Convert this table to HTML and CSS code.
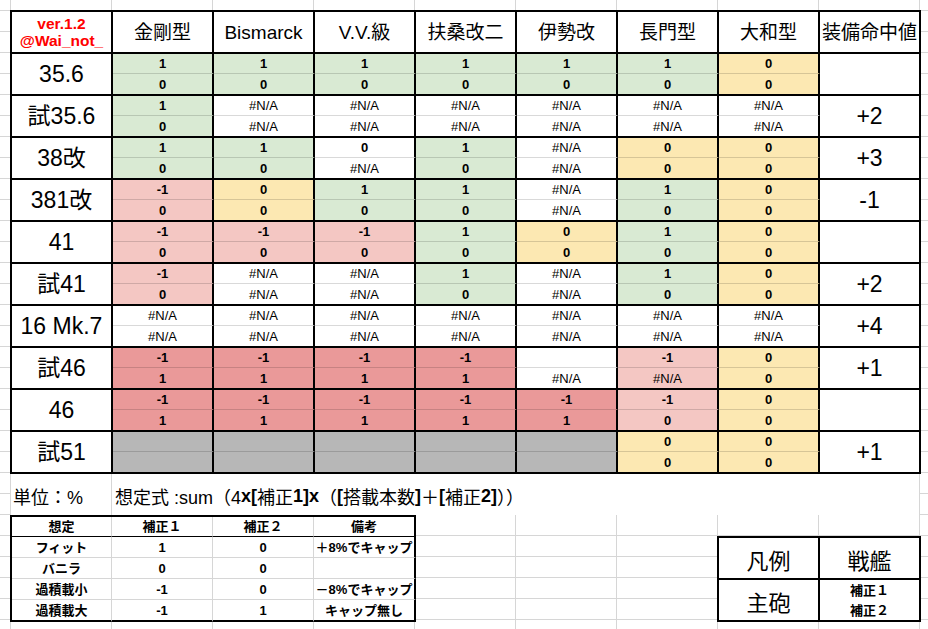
FILE: index.html
```html
<!DOCTYPE html>
<html lang="ja">
<head>
<meta charset="utf-8">
<title>主砲フィット表</title>
<link rel="stylesheet" href="styles.css">
</head>
<body>
<div class="sheet">
  <div class="main">
    <div class="hd ver"><span>ver.1.2</span><span>@Wai_not_</span></div>
    <div class="hd">金剛型</div>
    <div class="hd">Bismarck</div>
    <div class="hd">V.V.級</div>
    <div class="hd">扶桑改二</div>
    <div class="hd">伊勢改</div>
    <div class="hd">長門型</div>
    <div class="hd">大和型</div>
    <div class="hd">装備命中値</div>

    <!-- 35.6 -->
    <div class="lbl">35.6</div>
    <div class="t g">1</div><div class="t g">1</div><div class="t g">1</div><div class="t g">1</div><div class="t g">1</div><div class="t g">1</div><div class="t y">0</div>
    <div class="hit"></div>
    <div class="b g">0</div><div class="b g">0</div><div class="b g">0</div><div class="b g">0</div><div class="b g">0</div><div class="b g">0</div><div class="b y">0</div>

    <!-- 試35.6 -->
    <div class="lbl">試35.6</div>
    <div class="t g">1</div><div class="t na">#N/A</div><div class="t na">#N/A</div><div class="t na">#N/A</div><div class="t na">#N/A</div><div class="t na">#N/A</div><div class="t na">#N/A</div>
    <div class="hit">+2</div>
    <div class="b g">0</div><div class="b na">#N/A</div><div class="b na">#N/A</div><div class="b na">#N/A</div><div class="b na">#N/A</div><div class="b na">#N/A</div><div class="b na">#N/A</div>

    <!-- 38改 -->
    <div class="lbl">38改</div>
    <div class="t g">1</div><div class="t g">1</div><div class="t">0</div><div class="t g">1</div><div class="t na">#N/A</div><div class="t y">0</div><div class="t y">0</div>
    <div class="hit">+3</div>
    <div class="b g">0</div><div class="b g">0</div><div class="b na">#N/A</div><div class="b g">0</div><div class="b na">#N/A</div><div class="b y">0</div><div class="b y">0</div>

    <!-- 381改 -->
    <div class="lbl">381改</div>
    <div class="t p">-1</div><div class="t y">0</div><div class="t g">1</div><div class="t g">1</div><div class="t na">#N/A</div><div class="t g">1</div><div class="t y">0</div>
    <div class="hit">-1</div>
    <div class="b p">0</div><div class="b y">0</div><div class="b g">0</div><div class="b g">0</div><div class="b na">#N/A</div><div class="b g">0</div><div class="b y">0</div>

    <!-- 41 -->
    <div class="lbl">41</div>
    <div class="t p">-1</div><div class="t p">-1</div><div class="t p">-1</div><div class="t g">1</div><div class="t y">0</div><div class="t g">1</div><div class="t y">0</div>
    <div class="hit"></div>
    <div class="b p">0</div><div class="b p">0</div><div class="b p">0</div><div class="b g">0</div><div class="b y">0</div><div class="b g">0</div><div class="b y">0</div>

    <!-- 試41 -->
    <div class="lbl">試41</div>
    <div class="t p">-1</div><div class="t na">#N/A</div><div class="t na">#N/A</div><div class="t g">1</div><div class="t na">#N/A</div><div class="t g">1</div><div class="t y">0</div>
    <div class="hit">+2</div>
    <div class="b p">0</div><div class="b na">#N/A</div><div class="b na">#N/A</div><div class="b g">0</div><div class="b na">#N/A</div><div class="b g">0</div><div class="b y">0</div>

    <!-- 16 Mk.7 -->
    <div class="lbl">16 Mk.7</div>
    <div class="t na">#N/A</div><div class="t na">#N/A</div><div class="t na">#N/A</div><div class="t na">#N/A</div><div class="t na">#N/A</div><div class="t na">#N/A</div><div class="t na">#N/A</div>
    <div class="hit">+4</div>
    <div class="b na">#N/A</div><div class="b na">#N/A</div><div class="b na">#N/A</div><div class="b na">#N/A</div><div class="b na">#N/A</div><div class="b na">#N/A</div><div class="b na">#N/A</div>

    <!-- 試46 -->
    <div class="lbl">試46</div>
    <div class="t r">-1</div><div class="t r">-1</div><div class="t r">-1</div><div class="t r">-1</div><div class="t"></div><div class="t p">-1</div><div class="t y">0</div>
    <div class="hit">+1</div>
    <div class="b r">1</div><div class="b r">1</div><div class="b r">1</div><div class="b r">1</div><div class="b na">#N/A</div><div class="b p na">#N/A</div><div class="b y">0</div>

    <!-- 46 -->
    <div class="lbl">46</div>
    <div class="t r">-1</div><div class="t r">-1</div><div class="t r">-1</div><div class="t r">-1</div><div class="t r">-1</div><div class="t p">-1</div><div class="t y">0</div>
    <div class="hit"></div>
    <div class="b r">1</div><div class="b r">1</div><div class="b r">1</div><div class="b r">1</div><div class="b r">1</div><div class="b p">0</div><div class="b y">0</div>

    <!-- 試51 -->
    <div class="lbl">試51</div>
    <div class="t k"></div><div class="t k"></div><div class="t k"></div><div class="t k"></div><div class="t k"></div><div class="t y">0</div><div class="t y">0</div>
    <div class="hit">+1</div>
    <div class="b k"></div><div class="b k"></div><div class="b k"></div><div class="b k"></div><div class="b k"></div><div class="b y">0</div><div class="b y">0</div>
  </div>

  <div class="band">
    <div class="unit">単位：%</div>
    <div class="formula">想定式 :sum（4<b>x[</b>補正<b>1]x</b>（<b>[</b>搭載本数<b>]</b>＋<b>[</b>補正<b>2]</b>））</div>
  </div>

  <div class="bottom">
    <div class="assume">
      <div class="ah">想定</div><div class="ah">補正１</div><div class="ah">補正２</div><div class="ah e">備考</div>
      <div>フィット</div><div>1</div><div>0</div><div class="e">＋8%でキャップ</div>
      <div>バニラ</div><div>0</div><div>0</div><div class="e"></div>
      <div>過積載小</div><div>-1</div><div>0</div><div class="e">－8%でキャップ</div>
      <div class="z">過積載大</div><div class="z">-1</div><div class="z">1</div><div class="z e">キャップ無し</div>
    </div>

    <div class="legend">
      <div class="big">凡例</div>
      <div class="big">戦艦</div>
      <div class="big gun">主砲</div>
      <div class="small s1">補正１</div>
      <div class="small s2">補正２</div>
    </div>
  </div>
</div>
</body>
</html>
```

FILE: styles.css
```css
html, body {
  margin: 0;
  padding: 0;
}

body {
  width: 928px;
  height: 629px;
  overflow: hidden;
  background-color: #fff;
  background-image:
    linear-gradient(90deg, #d6d6d6 1px, transparent 1px),
    linear-gradient(180deg, #d6d6d6 1px, transparent 1px);
  background-size: 101px 21px;
  background-position: 10px 10px;
  font-family: "Liberation Sans", "Noto Sans CJK JP", sans-serif;
  color: #000;
}

.sheet {
  padding: 10px 0 0 10px;
}

/* ---------- main table ---------- */
.main {
  display: grid;
  grid-template-columns: repeat(9, 101px);
  grid-template-rows: 42px repeat(10, 20px 22px);
  width: max-content;
  border-top: 2px solid #000;
  border-left: 2px solid #000;
}

.main > div {
  box-sizing: border-box;
  border-right: 2px solid #000;
  background: #fff;
  display: flex;
  align-items: center;
  justify-content: center;
  font-size: 13px;
  font-weight: bold;
  line-height: 1;
  white-space: nowrap;
}

.main > .hd {
  border-bottom: 2px solid #000;
  font-size: 19px;
  font-weight: normal;
}

.main > .ver {
  flex-direction: column;
  color: #ff0000;
  font-weight: bold;
  font-size: 15.5px;
  line-height: 17px;
}

.main > .lbl,
.main > .hit {
  grid-row: span 2;
  border-bottom: 2px solid #000;
  font-size: 23px;
  font-weight: normal;
}

.main > .t {
  border-bottom: 1px solid rgba(0, 0, 0, 0.15);
}

.main > .b {
  border-bottom: 2px solid #000;
}

.main > .na {
  font-weight: normal;
}

.main > .g { background: #d9ead3; }
.main > .y { background: #fce8b2; }
.main > .p { background: #f4c7c3; }
.main > .r { background: #ea9999; }
.main > .k { background: #b7b7b7; }

/* ---------- formula band ---------- */
.band {
  display: flex;
  width: 908px;
  height: 41px;
  margin-left: 1px;
  background: #fff;
  font-size: 18px;
  white-space: nowrap;
}

.unit {
  box-sizing: border-box;
  width: 101px;
  border-right: 1px solid #d6d6d6;
  padding: 3px 0 0 2px;
  display: flex;
  align-items: center;
}

.formula {
  flex: 1;
  padding: 3px 0 0 3px;
  display: flex;
  align-items: center;
}

.formula b {
  font-weight: bold;
}

/* ---------- bottom ---------- */
.bottom {
  display: flex;
  align-items: flex-start;
}

.assume {
  display: grid;
  grid-template-columns: 100px 101px 101px 102px;
  grid-template-rows: 20px 21px 21px 21px 22px;
  border-top: 2px solid #000;
  border-left: 2px solid #000;
  font-size: 13px;
  font-weight: bold;
}

.assume > div {
  box-sizing: border-box;
  border-right: 1px solid #d6d6d6;
  border-bottom: 1px solid #d6d6d6;
  background: #fff;
  display: flex;
  align-items: center;
  justify-content: center;
  white-space: nowrap;
  line-height: 1;
}

.assume > .ah {
  border-bottom-color: #000;
}

.assume > .e {
  border-right: 2px solid #000;
}

.assume > .z {
  border-bottom: 2px solid #000;
}

.legend {
  margin: 21px 0 0 301px;
  display: grid;
  grid-template-columns: 101px 101px;
  grid-template-rows: 42px 21px 21px;
  border-top: 2px solid #000;
  border-left: 2px solid #000;
}

.legend > div {
  box-sizing: border-box;
  border-right: 2px solid #000;
  background: #fff;
  display: flex;
  justify-content: center;
  white-space: nowrap;
}

.legend > .big {
  font-size: 22px;
  line-height: 24px;
  align-items: flex-end;
  padding-bottom: 4px;
  border-bottom: 2px solid #000;
}

.legend > .gun {
  grid-row: span 2;
}

.legend > .small {
  font-size: 13px;
  font-weight: bold;
  line-height: 1;
  align-items: center;
}

.legend > .s2 {
  border-bottom: 2px solid #000;
}
```
